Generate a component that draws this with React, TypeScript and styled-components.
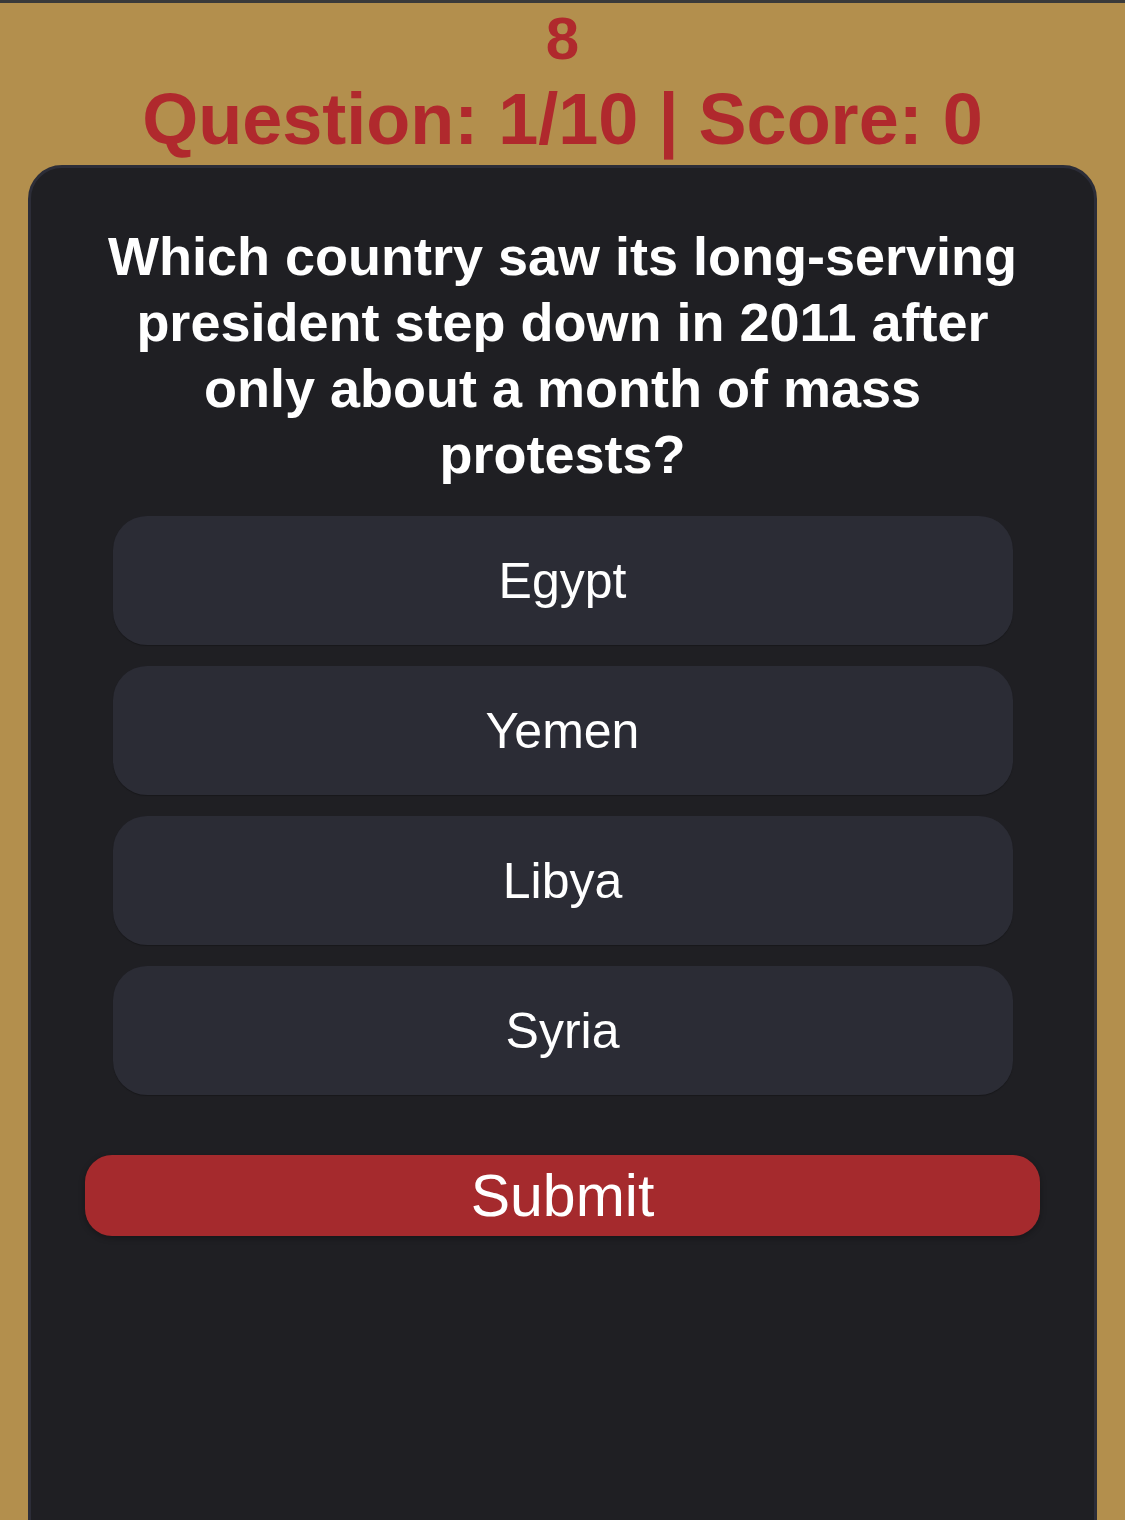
import React, { useState } from 'react';
import styled, { createGlobalStyle } from 'styled-components';

const GlobalStyle = createGlobalStyle`
  html, body {
    margin: 0;
    padding: 0;
    background: #b38f4d;
  }
  * {
    box-sizing: border-box;
  }
`;

const Page = styled.main`
  height: 100vh;
  overflow: hidden;
  background: #b38f4d;
  border-top: 3px solid #3a3a3a;
  display: flex;
  flex-direction: column;
  align-items: center;
  font-family: 'Liberation Sans', Arial, Helvetica, sans-serif;
`;

const Timer = styled.div`
  font-size: 60px;
  line-height: 72px;
  font-weight: 700;
  color: #b0292d;
`;

const Status = styled.h1`
  margin: 0 0 2px;
  font-size: 72px;
  line-height: 88px;
  font-weight: 700;
  color: #b0292d;
`;

const Card = styled.section`
  align-self: stretch;
  margin: 0 28px;
  min-height: 1400px;
  background: #1f1f23;
  border: 3px solid #2c2d38;
  border-radius: 34px;
  padding-top: 55px;
  display: flex;
  flex-direction: column;
  align-items: center;
`;

const QuestionText = styled.h2`
  margin: 0 0 29px;
  width: 940px;
  font-size: 54px;
  line-height: 66px;
  font-weight: 700;
  color: #ffffff;
  text-align: center;
`;

const Answers = styled.div`
  display: flex;
  flex-direction: column;
  gap: 21px;
`;

const Answer = styled.button<{ $selected: boolean }>`
  width: 900px;
  height: 129px;
  border: none;
  border-radius: 34px;
  background: ${({ $selected }) => ($selected ? '#3a3b47' : '#2b2c35')};
  box-shadow: 0 1px 1px rgba(0, 0, 0, 0.25);
  color: #ffffff;
  font-family: inherit;
  font-size: 50px;
  cursor: pointer;
`;

const Submit = styled.button`
  margin-top: 60px;
  width: 955px;
  height: 81px;
  border: none;
  border-radius: 27px;
  background: #a52a2d;
  box-shadow: 0 2px 6px rgba(0, 0, 0, 0.3);
  color: #ffffff;
  font-family: inherit;
  font-size: 59px;
  cursor: pointer;
`;

const options = ['Egypt', 'Yemen', 'Libya', 'Syria'];

export default function App() {
  const [selected, setSelected] = useState<string | null>(null);

  return (
    <Page>
      <GlobalStyle />
      <Timer>8</Timer>
      <Status>Question: 1/10 | Score: 0</Status>
      <Card>
        <QuestionText>
          Which country saw its long-serving president step down in 2011 after only about a month of mass protests?
        </QuestionText>
        <Answers>
          {options.map((option) => (
            <Answer key={option} $selected={selected === option} onClick={() => setSelected(option)}>
              {option}
            </Answer>
          ))}
        </Answers>
        <Submit>Submit</Submit>
      </Card>
    </Page>
  );
}
